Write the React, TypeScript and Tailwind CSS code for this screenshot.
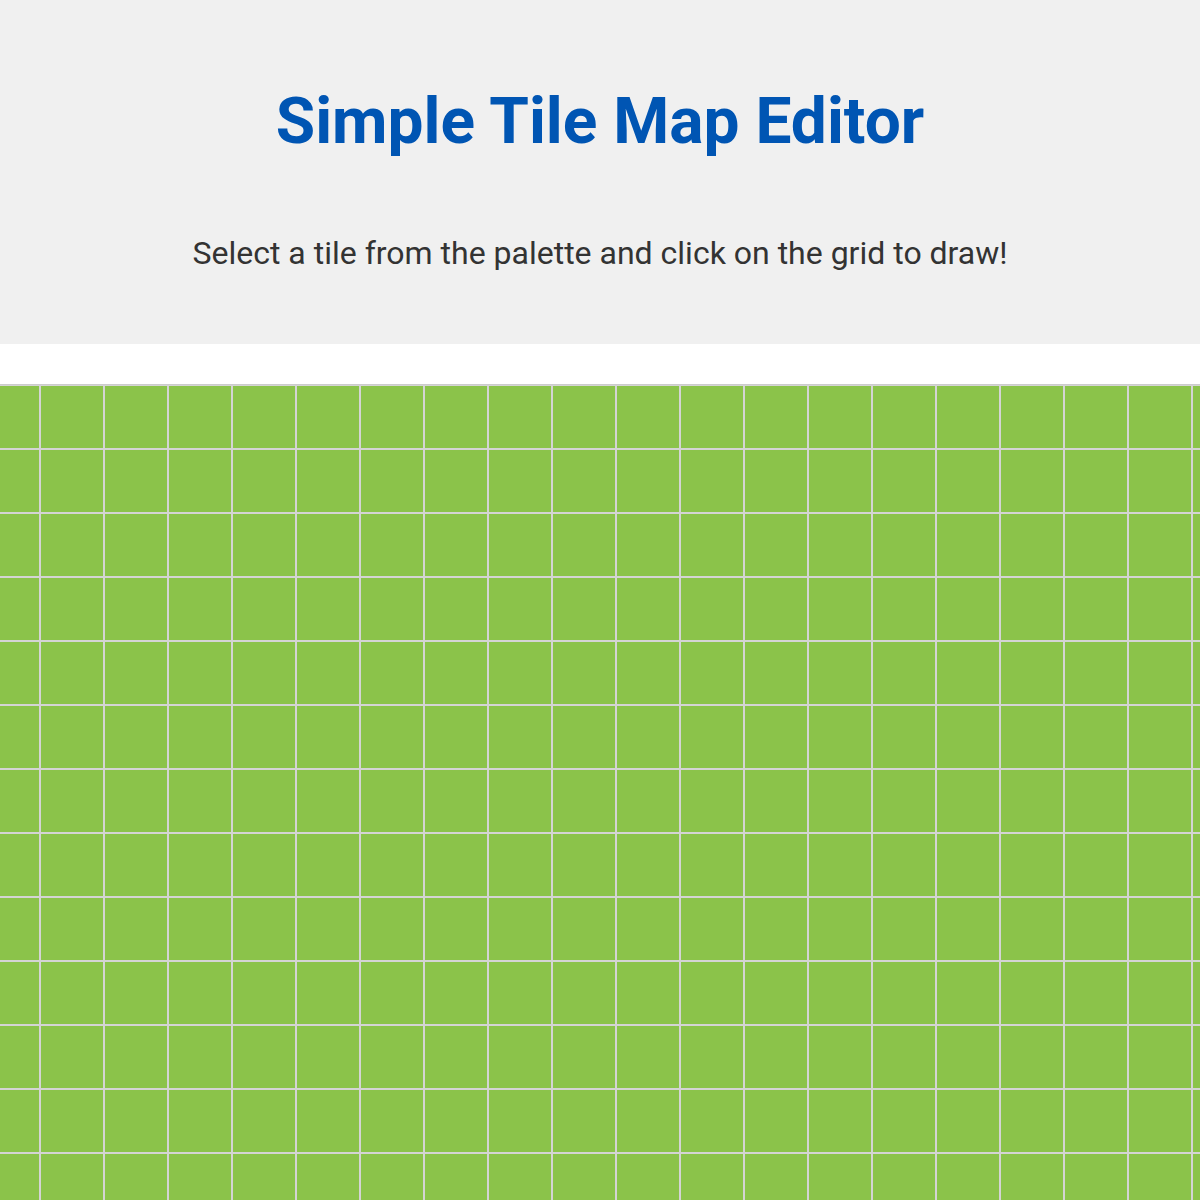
import React from "react";

const COLS = 20;
const ROWS = 14;

function TileGrid() {
  const cells = Array.from({ length: COLS * ROWS }, (_, i) => i);
  return (
    <div className="w-full overflow-hidden">
      <div className="-ml-[25px] w-max border border-[#cccccc]">
        <div className="grid grid-cols-[repeat(20,64px)]">
          {cells.map((i) => (
            <div
              key={i}
              className="h-[64px] w-[64px] border border-[#d4d4d4] bg-[#8bc34a]"
            />
          ))}
        </div>
      </div>
    </div>
  );
}

export default function App() {
  return (
    <div className="min-h-[1200px] bg-white font-['Roboto',_'Liberation_Sans',_sans-serif]">
      <header className="flex flex-col items-center bg-[#f0f0f0] pt-[83px] pb-[72px] text-center">
        <h1 className="text-[64px] font-bold leading-[77px] text-[#0055b3]">
          Simple Tile Map Editor
        </h1>
        <p className="mt-[74px] text-[32px] leading-[38px] text-[#333333]">
          Select a tile from the palette and click on the grid to draw!
        </p>
      </header>
      <main className="mt-[40px]">
        <TileGrid />
      </main>
    </div>
  );
}
